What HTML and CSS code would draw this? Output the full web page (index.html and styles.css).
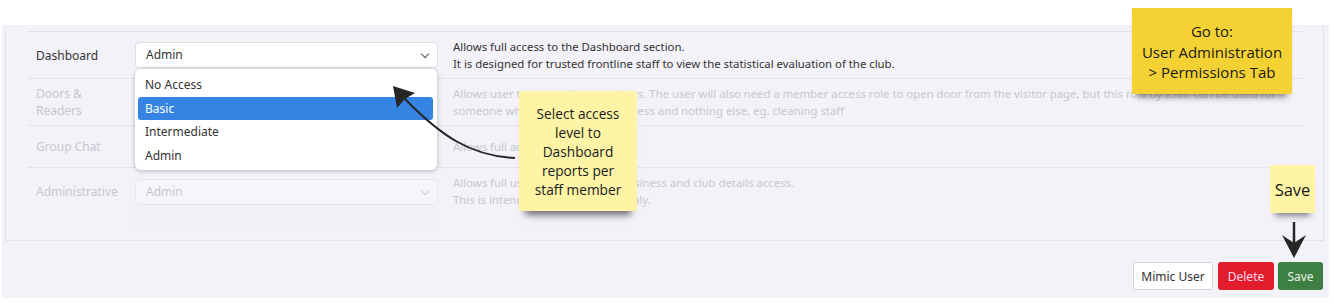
FILE: index.html
```html
<!DOCTYPE html>
<html lang="en">
<head>
  <meta charset="UTF-8">
  <title>User Permissions</title>
  <link rel="stylesheet" href="styles.css">
</head>
<body>
  <div class="screen">
    <div class="panel">
      <div class="card">
        <div class="perm-row">
          <div class="perm-label">Dashboard</div>
          <div class="select-wrap">
            <div class="select">Admin<span class="chevron"></span></div>
            <ul class="dropdown">
              <li>No Access</li>
              <li class="active">Basic</li>
              <li>Intermediate</li>
              <li>Admin</li>
            </ul>
          </div>
          <div class="perm-desc">
            Allows full access to the Dashboard section.<br>
            It is designed for trusted frontline staff to view the statistical evaluation of the club.
          </div>
        </div>

        <div class="perm-row faded">
          <div class="perm-label">Doors &amp;<br>Readers</div>
          <div class="select-wrap"></div>
          <div class="perm-desc">
            Allows user to manually open doors. The user will also need a member access role to open door from the visitor page, but this role by itself can be used for<br>
            someone who only needs door access and nothing else, eg. cleaning staff
          </div>
        </div>

        <div class="perm-row faded">
          <div class="perm-label">Group Chat</div>
          <div class="select-wrap"></div>
          <div class="perm-desc">Allows full access to group chats.</div>
        </div>

        <div class="perm-row faded last">
          <div class="perm-label">Administrative</div>
          <div class="select-wrap">
            <div class="select">Admin<span class="chevron"></span></div>
            <div class="select-help"></div>
          </div>
          <div class="perm-desc">
            Allows full user administration, business and club details access.<br>
            This is intended for club owners only.
          </div>
        </div>
      </div>

      <div class="actions">
        <button class="btn btn-light">Mimic User</button>
        <button class="btn btn-red">Delete</button>
        <button class="btn btn-green">Save</button>
      </div>
    </div>

    <svg class="arrows" width="1334" height="305" viewBox="0 0 1334 305">
      <path d="M515 158 C470 156 440 135 405 99" fill="none" stroke="#262626" stroke-width="2"/>
      <path d="M393 86 L415 93 L405 99 L397 108 Z" fill="#262626"/>
      <line x1="1294" y1="222" x2="1294" y2="246" stroke="#262626" stroke-width="2.5"/>
      <path d="M1282 235 L1294 243 L1306 235 L1294 258 Z" fill="#262626"/>
    </svg>

    <div class="note note-select">Select access level to Dashboard reports per staff member</div>
    <div class="note note-goto">Go to:<br>User Administration<br>&gt; Permissions Tab</div>
    <div class="note note-save">Save</div>
  </div>
</body>
</html>
```

FILE: styles.css
```css
* {
  box-sizing: border-box;
}
body {
  margin: 0;
  background: #fff;
  font-family: 'Noto Sans', sans-serif;
  color: #333;
}
.screen {
  position: relative;
  width: 1334px;
  height: 305px;
  overflow: hidden;
}
.panel {
  margin: 25px 0 0 2px;
  width: 1327px;
  height: 273px;
  background: #f3f2f8;
}
.card {
  margin-left: 3px;
  width: 1319px;
  height: 216px;
  border: 1px solid #e4e3ea;
  border-top: none;
  padding: 6px 21px 0 22px;
}
.perm-row {
  display: grid;
  grid-template-columns: 92px 303px 1fr;
  column-gap: 15px;
  align-items: center;
  min-height: 42px;
  padding: 6px 0;
  border-top: 1px solid #e4e3ea;
}
.perm-row.last {
  align-items: start;
  padding-top: 11px;
}
.perm-label {
  padding-left: 8px;
  font-size: 12px;
  line-height: 17px;
  color: #333;
}
.perm-row.last .perm-label {
  padding-top: 4px;
}
.perm-desc {
  font-size: 11.35px;
  line-height: 17px;
  color: #333;
}
.perm-row.last .perm-desc {
  margin-top: -5px;
}
.faded .perm-label,
.faded .perm-desc {
  color: #c8c7cf;
}
.select-wrap {
  position: relative;
}
.select {
  position: relative;
  height: 26px;
  padding-left: 10px;
  background: #fff;
  border: 1px solid #dedde6;
  border-radius: 4px;
  font-size: 12px;
  line-height: 24px;
  color: #333;
}
.chevron {
  position: absolute;
  right: 9px;
  top: 8px;
  width: 6px;
  height: 6px;
  border-right: 1px solid #555;
  border-bottom: 1px solid #555;
  transform: rotate(45deg);
}
.faded .select {
  background: #f6f5fa;
  border-color: #e8e7ee;
  color: #c8c7cf;
}
.faded .chevron {
  border-color: #d0cfd6;
}
.select-help {
  height: 21px;
  margin-top: 1px;
  background: #f2f1f7;
}
.dropdown {
  position: absolute;
  top: 27px;
  left: 0;
  width: 302px;
  margin: 0;
  padding: 4px 4px 3px 3px;
  list-style: none;
  background: #fff;
  border-radius: 6px;
  box-shadow: 0 1px 5px rgba(0, 0, 0, 0.25);
  z-index: 2;
}
.dropdown li {
  height: 23.5px;
  padding-left: 7px;
  font-size: 12px;
  line-height: 23.5px;
  color: #333;
  border-radius: 3px;
}
.dropdown li.active {
  background: #3584e4;
  color: #fff;
}
.actions {
  display: flex;
  justify-content: flex-end;
  gap: 4px;
  padding: 21px 6px 0 0;
}
.btn {
  height: 28px;
  padding: 0 6px;
  border: 1px solid transparent;
  border-radius: 3px;
  font-family: 'Noto Sans', sans-serif;
  font-size: 12px;
  cursor: pointer;
}
.btn-light {
  width: 80px;
  margin-right: 1px;
  background: #fff;
  border-color: #d6d6d6;
  color: #333;
}
.btn-red {
  width: 56px;
  background: #e31c2b;
  color: #fde;
}
.btn-green {
  width: 45px;
  background: #3e7f44;
  color: #e8f3e8;
}
.arrows {
  position: absolute;
  top: 0;
  left: 0;
  z-index: 3;
}
.note {
  position: absolute;
  z-index: 4;
  display: flex;
  align-items: center;
  justify-content: center;
  text-align: center;
  font-family: 'Open Sans', sans-serif;
  color: #1a1a1a;
}
.note-select {
  left: 519px;
  top: 91px;
  width: 118px;
  height: 120px;
  padding: 0 12px;
  background: #fdf5a5;
  font-size: 13.7px;
  line-height: 19px;
  box-shadow: 0 10px 7px -6px rgba(0, 0, 0, 0.55);
}
.note-goto {
  left: 1132px;
  top: 8px;
  width: 160px;
  height: 86px;
  padding-top: 2px;
  background: #f5d233;
  font-size: 15px;
  line-height: 20.5px;
  box-shadow: 0 8px 6px -5px rgba(0, 0, 0, 0.45);
}
.note-save {
  left: 1270px;
  top: 165px;
  width: 45px;
  height: 48px;
  background: #fdf5a5;
  font-size: 16.5px;
  box-shadow: 0 8px 6px -5px rgba(0, 0, 0, 0.45);
}
```
